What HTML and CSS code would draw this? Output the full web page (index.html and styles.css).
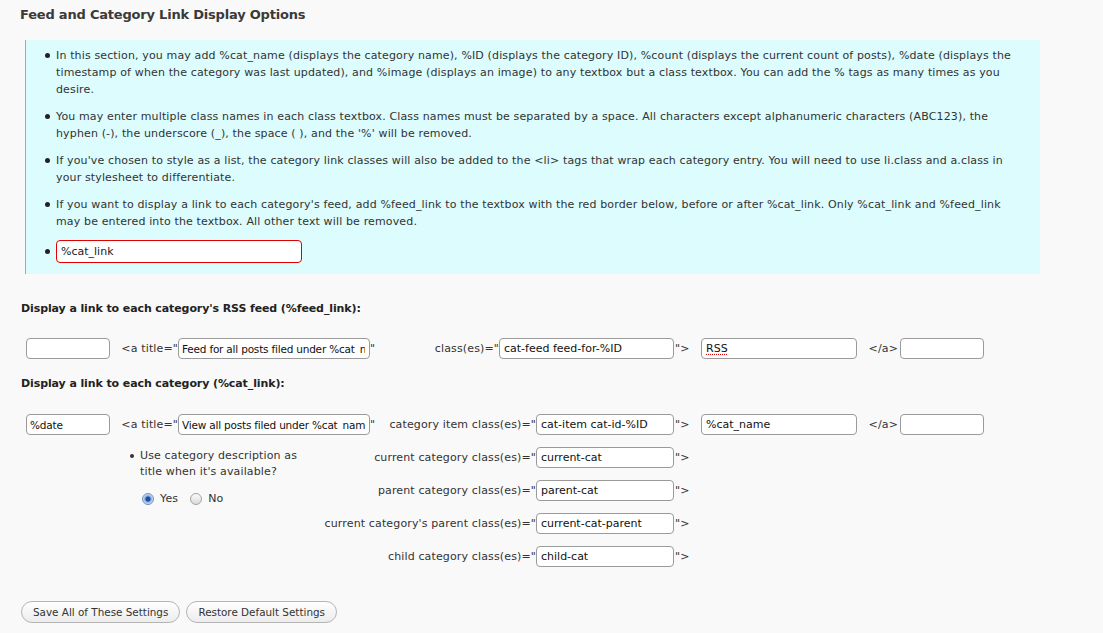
FILE: index.html
```html
<!DOCTYPE html>
<html lang="en">
<head>
<meta charset="utf-8">
<title>Feed and Category Link Display Options</title>
<link rel="stylesheet" href="styles.css">
</head>
<body>
<div class="wrap">
  <h3 class="title">Feed and Category Link Display Options</h3>
  <div class="info">
    <ul class="notes">
      <li>In this section, you may add %cat_name (displays the category name), %ID (displays the category ID), %count (displays the current count of posts), %date (displays the timestamp of when the category was last updated), and %image (displays an image) to any textbox but a class textbox. You can add the % tags as many times as you desire.</li>
      <li>You may enter multiple class names in each class textbox. Class names must be separated by a space. All characters except alphanumeric characters (ABC123), the hyphen (-), the underscore (_), the space ( ), and the '%' will be removed.</li>
      <li>If you've chosen to style as a list, the category link classes will also be added to the &lt;li&gt; tags that wrap each category entry. You will need to use li.class and a.class in your stylesheet to differentiate.</li>
      <li>If you want to display a link to each category's feed, add %feed_link to the textbox with the red border below, before or after %cat_link. Only %cat_link and %feed_link may be entered into the textbox. All other text will be removed.</li>
      <li class="feed-item"><input class="feed-box" type="text" value="%cat_link"></li>
    </ul>
  </div>

  <p class="label">Display a link to each category's RSS feed (%feed_link):</p>
  <div class="grid grid-feed">
    <input class="in w-side" type="text" value="">
    <span class="t right">&lt;a title="</span>
    <span class="cell"><input class="in w-title small" type="text" value="Feed for all posts filed under %cat_name"><span class="t">"</span></span>
    <span class="cell end"><span class="t">class(es)="</span><input class="in w-class-wide" type="text" value="cat-feed feed-for-%ID"></span>
    <span class="t close">"&gt;</span>
    <input class="in w-text spell" type="text" value="RSS">
    <span class="t right enda">&lt;/a&gt;</span>
    <input class="in w-side" type="text" value="">
  </div>

  <p class="label label2">Display a link to each category (%cat_link):</p>
  <div class="grid">
    <input class="in w-side small" type="text" value="%date">
    <span class="t right">&lt;a title="</span>
    <span class="cell"><input class="in w-title small" type="text" value="View all posts filed under %cat_name"><span class="t">"</span></span>
    <span class="cell end"><span class="t">category item class(es)="</span><input class="in w-class" type="text" value="cat-item cat-id-%ID"></span>
    <span class="t close">"&gt;</span>
    <input class="in w-text" type="text" value="%cat_name">
    <span class="t right enda">&lt;/a&gt;</span>
    <input class="in w-side" type="text" value="">

    <div class="desc">
      <ul class="desc-list">
        <li>Use category description as title when it's available?</li>
      </ul>
      <div class="radios">
        <label class="opt"><input class="radio" type="radio" name="desc" checked>Yes</label>
        <label class="opt"><input class="radio" type="radio" name="desc">No</label>
      </div>
    </div>

    <span class="cell end sub"><span class="t">current category class(es)="</span><input class="in w-class" type="text" value="current-cat"></span>
    <span class="t close sub-close">"&gt;</span>
    <span class="cell end sub"><span class="t">parent category class(es)="</span><input class="in w-class" type="text" value="parent-cat"></span>
    <span class="t close sub-close">"&gt;</span>
    <span class="cell end sub"><span class="t">current category's parent class(es)="</span><input class="in w-class" type="text" value="current-cat-parent"></span>
    <span class="t close sub-close">"&gt;</span>
    <span class="cell end sub"><span class="t">child category class(es)="</span><input class="in w-class" type="text" value="child-cat"></span>
    <span class="t close sub-close">"&gt;</span>
  </div>

  <div class="buttons">
    <button class="btn" type="button">Save All of These Settings</button>
    <button class="btn" type="button">Restore Default Settings</button>
  </div>
</div>
</body>
</html>
```

FILE: styles.css
```css
html, body {
  margin: 0;
  padding: 0;
  background: #f9f9f9;
}
body {
  font-family: "DejaVu Sans", Verdana, sans-serif;
  font-size: 11px;
  color: #333;
}
.wrap {
  padding: 7px 0 0 20px;
}
.title {
  margin: 0;
  font-size: 13px;
  line-height: 16px;
  font-weight: bold;
  letter-spacing: -0.2px;
  color: #3a3a3a;
}
.info {
  margin: 17px 0 0 5px;
  width: 1014px;
  background: #dcfcfd;
  border-left: 1px solid #a8a8a8;
  padding: 7px 0 11px;
}
.notes {
  margin: 0;
  padding: 0 20px 0 30px;
  line-height: 17px;
  list-style: none;
  letter-spacing: 0.14px;
}
.notes li {
  position: relative;
  margin: 0 0 10px;
}
.notes li::before {
  content: "";
  position: absolute;
  left: -11px;
  top: 6px;
  width: 5px;
  height: 5px;
  border-radius: 50%;
  background: #222;
}
.notes li.feed-item {
  margin: 0;
  line-height: 23px;
}
.notes li.feed-item::before {
  top: 9px;
}
.feed-box {
  box-sizing: border-box;
  width: 246px;
  height: 23px;
  margin: 0;
  padding: 0 4px;
  border: 1px solid #e00000;
  border-radius: 4px;
  background: #fff;
  font: 11px "DejaVu Sans", Verdana, sans-serif;
  color: #222;
  vertical-align: top;
}
.label {
  margin: 27px 0 0 1px;
  font-weight: bold;
  font-size: 11px;
  line-height: 16px;
  letter-spacing: -0.1px;
  color: #222;
}
.label2 {
  margin-top: 17px;
}
.grid {
  display: grid;
  grid-template-columns: 84px 68px 213px 283px 27px 156px 43px 84px;
  grid-auto-rows: 21px;
  row-gap: 12px;
  align-items: center;
  margin: 22px 0 0 6px;
}
.grid-feed {
  margin-top: 21px;
}
.t {
  white-space: nowrap;
  color: #333;
  letter-spacing: 0.14px;
}
.right {
  text-align: right;
}
.enda {
  padding-right: 2px;
}
.close {
  padding-left: 1px;
}
.cell {
  display: flex;
  align-items: center;
  white-space: nowrap;
}
.cell.end {
  justify-content: flex-end;
}
.sub {
  grid-column: 4;
}
.sub-close {
  grid-column: 5;
}
.in {
  box-sizing: border-box;
  height: 21px;
  margin: 0;
  padding: 0 4px;
  border: 1px solid #9a9a9a;
  border-radius: 4px;
  background: #fff;
  font: 11px/19px "DejaVu Sans", Verdana, sans-serif;
  color: #111;
}
.in.small {
  font-size: 10.5px;
  letter-spacing: -0.2px;
  line-height: 19px;
  padding-left: 3px;
}
.in.spell {
  text-decoration: underline dotted #d00;
  text-underline-offset: 2px;
}
.w-side { width: 84px; }
.w-title { width: 192px; }
.w-class-wide { width: 175px; }
.w-class { width: 138px; }
.w-text { width: 156px; }
.desc {
  grid-column: 1 / 4;
  grid-row: 2 / 6;
  align-self: start;
  padding-left: 104px;
  letter-spacing: 0.14px;
}
.desc-list {
  margin: 1px 0 0;
  padding: 0 0 0 10px;
  width: 170px;
  line-height: 16px;
  list-style: none;
}
.desc-list li {
  position: relative;
}
.desc-list li::before {
  content: "";
  position: absolute;
  left: -10px;
  top: 6px;
  width: 4px;
  height: 4px;
  border-radius: 50%;
  background: #333;
}
.radios {
  display: flex;
  align-items: center;
  gap: 12px;
  margin: 11px 0 0 12px;
  line-height: 16px;
}
.opt {
  display: flex;
  align-items: center;
  color: #333;
}
.radio {
  appearance: none;
  -webkit-appearance: none;
  box-sizing: border-box;
  width: 12px;
  height: 12px;
  margin: 0 6px 0 0;
  border: 1px solid #a3a3a3;
  border-radius: 50%;
  background: linear-gradient(#fbfbfb, #dadada);
}
.radio:checked {
  border-color: #6f8cbf;
  background: radial-gradient(circle, #1c4d9e 0, #1c4d9e 2px, #7fa6dd 3px, #d7e4f6 5px);
}
.buttons {
  display: flex;
  gap: 6px;
  margin: 34px 0 0 1px;
}
.btn {
  box-sizing: border-box;
  height: 22px;
  padding: 0 11px;
  border: 1px solid #b5b5b5;
  border-radius: 11px;
  background: linear-gradient(#ffffff, #ececec);
  font: 10.4px "DejaVu Sans", Verdana, sans-serif;
  color: #333;
}
```
